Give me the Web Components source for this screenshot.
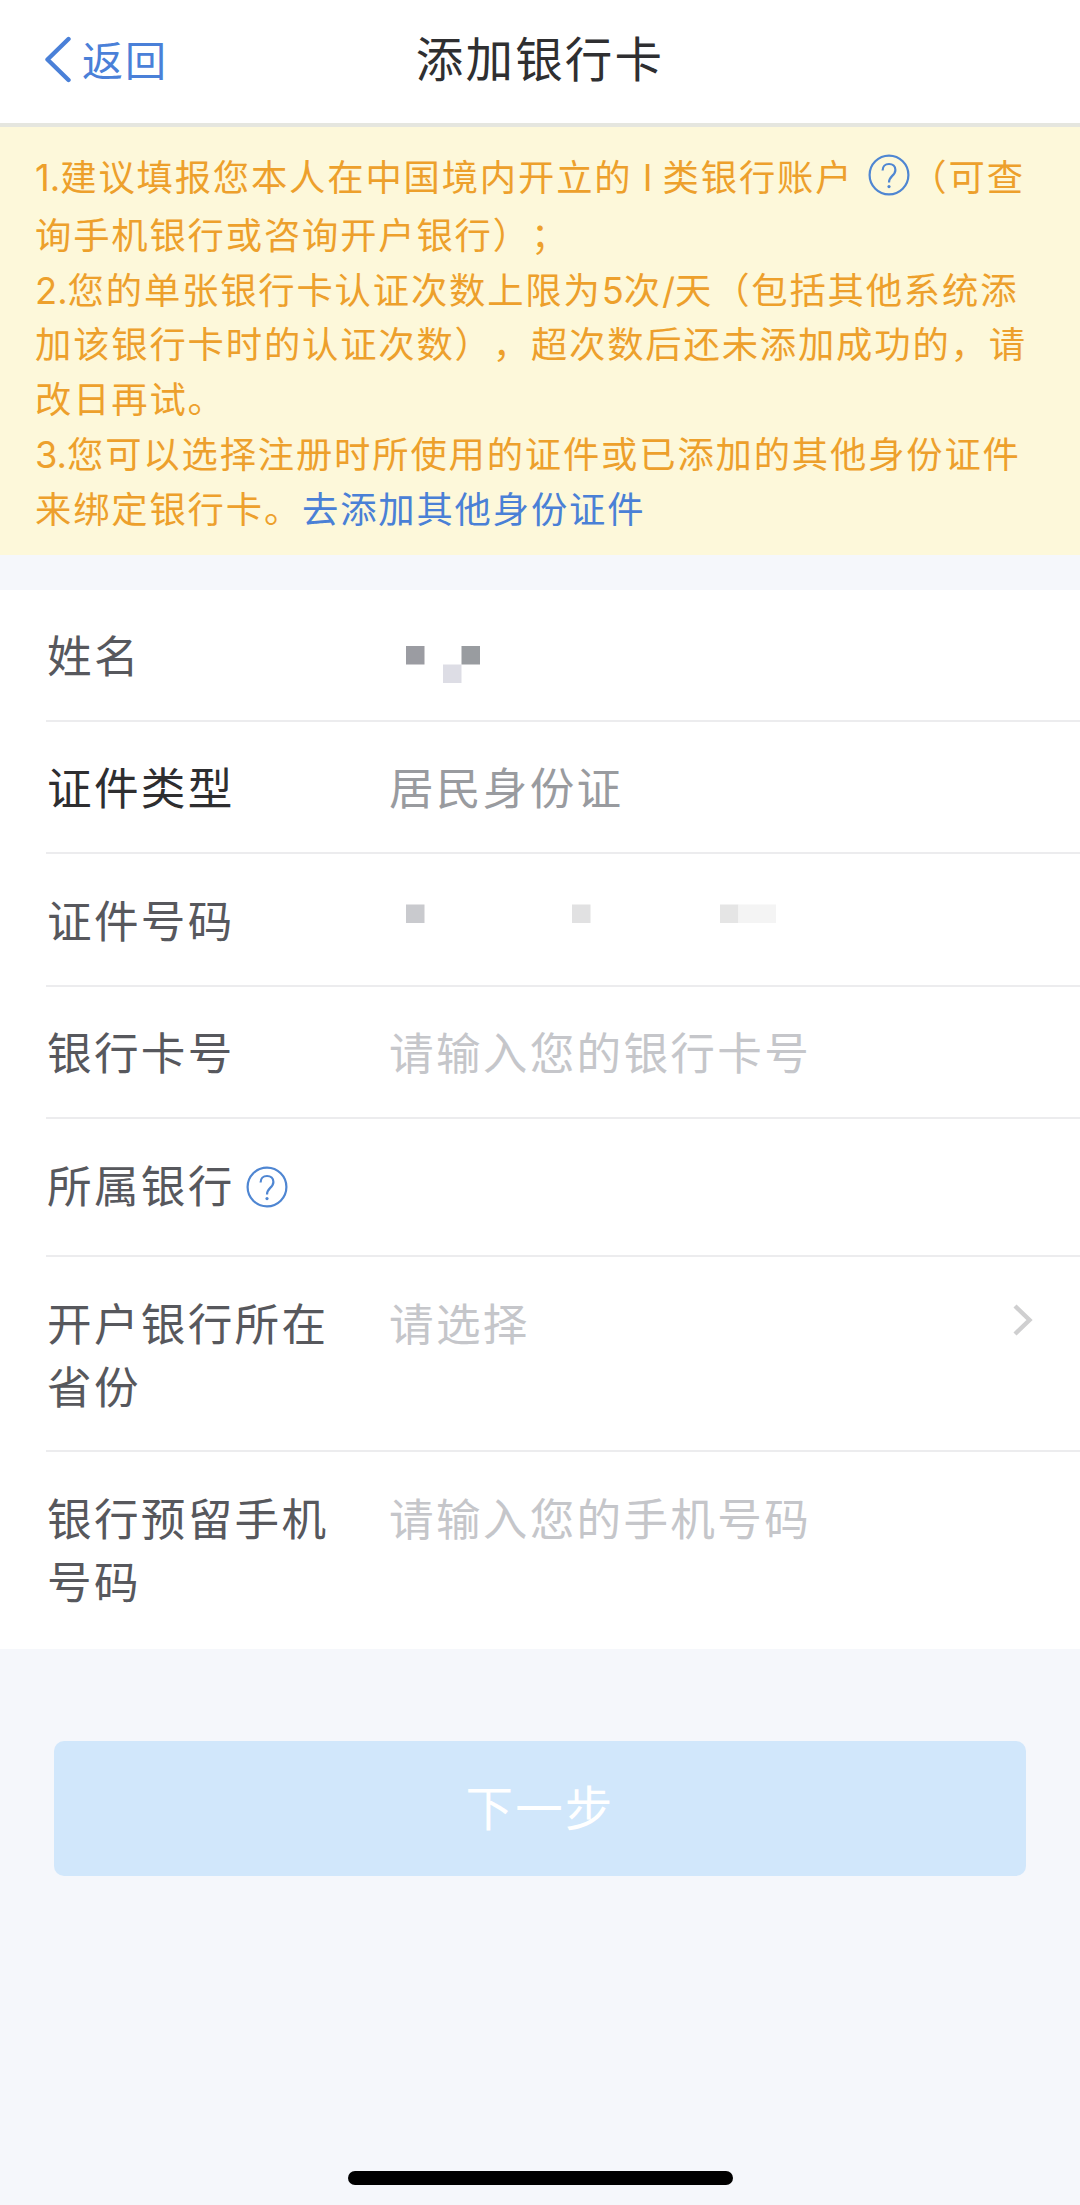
<!DOCTYPE html>
<html lang="zh-CN">
<head>
<meta charset="utf-8">
<title>添加银行卡</title>
<style>
  body {
    margin: 0;
    background: #f5f7fb;
    font-family: Inter, "Noto Sans CJK SC", sans-serif;
    text-spacing-trim: space-all;
  }
</style>
</head>
<body>
<bank-card-page></bank-card-page>

<script>
/**
 * Round question mark button
 */
class HelpIcon extends HTMLElement {
  constructor() {
    super();
    this.attachShadow({ mode: 'open' });
    this.shadowRoot.innerHTML = `
      <style>
        :host { display: inline-block; width: 42px; height: 42px; color: #4f86d2; }
        svg { display: block; }
      </style>
      <svg width="42" height="42" viewBox="0 0 42 42" fill="none" stroke="currentColor">
        <circle cx="21" cy="21" r="19.4" stroke-width="2.2"/>
        <path d="M14.6 16.4C14.6 12.4 17.2 10 21 10s6.4 2.4 6.4 6c0 2.8-1.5 4.3-3.4 6.1-2 1.9-3 3.2-3 6.4" stroke-width="2.2"/>
        <circle cx="21" cy="32.6" r="1.6" fill="currentColor" stroke="none"/>
      </svg>
    `;
  }
}
customElements.define('help-icon', HelpIcon);

/**
 * Top bar: back link on the left, title in the centre
 */
class NavBar extends HTMLElement {
  constructor() {
    super();
    this.attachShadow({ mode: 'open' });
    this.shadowRoot.innerHTML = `
      <style>
        :host {
          display: grid;
          grid-template-columns: 1fr auto 1fr;
          align-items: center;
          box-sizing: border-box;
          height: 127px;
          padding: 0 43px 4px;
          background: #fff;
          border-bottom: 4px solid #e5e6df;
        }
        .back { display: flex; align-items: center; color: #4a80d8; }
        .back span { margin: 3px 0 0 10px; font-size: 41px; line-height: 50px; letter-spacing: 2px; }
        h1 {
          margin: 0;
          font-size: 47.5px;
          font-weight: 400;
          line-height: 60px;
          letter-spacing: 2.2px;
          color: #2f2f31;
        }
      </style>
      <div class="back">
        <svg width="29" height="48" viewBox="0 0 29 48" fill="none" stroke="currentColor" stroke-width="4.4" stroke-linecap="round" stroke-linejoin="round">
          <path d="M25.5 3L4.5 23.5l21 20.5"/>
        </svg>
        <span><slot name="back"></slot></span>
      </div>
      <h1><slot></slot></h1>
    `;
  }
}
customElements.define('nav-bar', NavBar);

/**
 * Yellow notice block, one child per line
 */
class NoticePanel extends HTMLElement {
  constructor() {
    super();
    this.attachShadow({ mode: 'open' });
    this.shadowRoot.innerHTML = `
      <style>
        :host {
          display: block;
          box-sizing: border-box;
          height: 428px;
          padding: 20px 35px 0;
          background: #fdf8da;
          font-size: 36.3px;
          letter-spacing: 1.85px;
          line-height: 54.7px;
          color: #eda02c;
          white-space: nowrap;
        }
        ::slotted(p) { margin: 0; }
        ::slotted(p.tall) { display: flex; align-items: center; height: 62px; }
      </style>
      <slot></slot>
    `;
  }
}
customElements.define('notice-panel', NoticePanel);

/**
 * Form row: label, value or placeholder, optional arrow
 */
class FormRow extends HTMLElement {
  constructor() {
    super();
    this.attachShadow({ mode: 'open' });
    const arrow = this.hasAttribute('arrow') ? `
      <svg class="arrow" width="24" height="36" viewBox="0 0 24 36" fill="none" stroke="#cfcfd0" stroke-width="4.4">
        <path d="M4 4l14.5 14L4 32"/>
      </svg>` : '';

    this.shadowRoot.innerHTML = `
      <style>
        :host {
          display: flex;
          box-sizing: border-box;
          min-height: 132.4px;
          margin-left: 46px;
          padding: 36.5px 45px 29.9px 0;
          border-bottom: 2.5px solid #ececee;
          font-size: 44.6px;
          letter-spacing: 2.3px;
          line-height: 63.5px;
          color: #57585d;
        }
        :host(:last-of-type) { border-bottom-color: transparent; }
        :host([tall]) { min-height: 138px; }
        :host([strong]) .label { color: #2e2e30; }
        .label { display: flex; flex: none; box-sizing: border-box; width: 343px; padding-left: 1px; }
        .value { flex: 1; color: #999b9f; }
        :host([placeholder]) .value { color: #c5c6ca; }
        .arrow { flex: none; margin-top: 8px; }
      </style>
      <div class="label"><span><slot name="label"></slot></span><slot name="help"></slot></div>
      <div class="value">${this.getAttribute('placeholder') || ''}<slot></slot></div>
      ${arrow}
    `;
  }
}
customElements.define('form-row', FormRow);

/**
 * Masked value, drawn as mosaic blocks
 * blocks="x,y,width,colour;..."
 */
class MaskedValue extends HTMLElement {
  constructor() {
    super();
    this.attachShadow({ mode: 'open' });
    const rects = this.getAttribute('blocks').split(';').map(item => {
      const [x, y, width, fill] = item.split(',');
      return `<rect x="${x}" y="${y}" width="${width}" height="18.5" fill="${fill}"/>`;
    }).join('');

    this.shadowRoot.innerHTML = `
      <style>
        :host { display: block; }
        svg { display: block; }
      </style>
      <svg width="420" height="63" viewBox="0 0 420 63">${rects}</svg>
    `;
  }
}
customElements.define('masked-value', MaskedValue);

class NextButton extends HTMLElement {
  constructor() {
    super();
    this.attachShadow({ mode: 'open' });
    this.shadowRoot.innerHTML = `
      <style>
        :host { display: block; padding: 0 54px; }
        button {
          display: block;
          width: 100%;
          height: 135px;
          padding: 0 0 7px;
          border: 0;
          border-radius: 10px;
          background: #d1e7fb;
          color: #fff;
          font: inherit;
          font-size: 47.5px;
          letter-spacing: 2.2px;
        }
      </style>
      <button disabled><slot></slot></button>
    `;
  }
}
customElements.define('next-button', NextButton);

class BankCardPage extends HTMLElement {
  constructor() {
    super();
    this.attachShadow({ mode: 'open' });
    this.shadowRoot.innerHTML = `
      <style>
        :host { display: flex; flex-direction: column; height: 2205px; background: #f5f7fb; }
        .notice-help { margin: -7px 0 0 15px; }
        .num { letter-spacing: 0; }
        .link { color: #4a80d6; }
        .form { margin: 34.5px 0 92px; height: 1059.5px; background: #fff; }
        .row-help { margin: 10px 0 0 11px; }
        .home { width: 385px; height: 14px; margin: auto auto 20px; border-radius: 7px; background: #000; }
      </style>

      <nav-bar><span slot="back">返回</span>添加银行卡</nav-bar>

      <notice-panel>
        <p class="tall"><span><span class="num">1.</span>建议填报您本人在中国境内开立的<span class="num"> I </span>类银行账户</span><help-icon class="notice-help"></help-icon><span>（可查</span></p>
        <p>询手机银行或咨询开户银行）；</p>
        <p><span class="num">2.</span>您的单张银行卡认证次数上限为<span class="num">5</span>次<span class="num">/</span>天（包括其他系统添</p>
        <p>加该银行卡时的认证次数），超次数后还未添加成功的，请</p>
        <p>改日再试。</p>
        <p><span class="num">3.</span>您可以选择注册时所使用的证件或已添加的其他身份证件</p>
        <p>来绑定银行卡。<span class="link">去添加其他身份证件</span></p>
      </notice-panel>

      <div class="form">
        <form-row>
          <span slot="label">姓名</span>
          <masked-value blocks="17,20,18.5,#9b9ca2;54,38.5,18.5,#dddde5;72.5,20,18.5,#999ca0"></masked-value>
        </form-row>
        <form-row strong><span slot="label">证件类型</span>居民身份证</form-row>
        <form-row>
          <span slot="label">证件号码</span>
          <masked-value blocks="17,13.5,18.5,#c9cace;183,13.5,18.5,#e1e1e2;331,13.5,18.5,#e5e5e5;349.5,13.5,37.5,#f4f4f4"></masked-value>
        </form-row>
        <form-row placeholder="请输入您的银行卡号"><span slot="label">银行卡号</span></form-row>
        <form-row tall><span slot="label">所属银行</span><help-icon slot="help" class="row-help"></help-icon></form-row>
        <form-row placeholder="请选择" arrow><span slot="label">开户银行所在<br>省份</span></form-row>
        <form-row placeholder="请输入您的手机号码"><span slot="label">银行预留手机<br>号码</span></form-row>
      </div>

      <next-button>下一步</next-button>
      <div class="home"></div>
    `;
  }
}
customElements.define('bank-card-page', BankCardPage);
</script>
</body>
</html>
